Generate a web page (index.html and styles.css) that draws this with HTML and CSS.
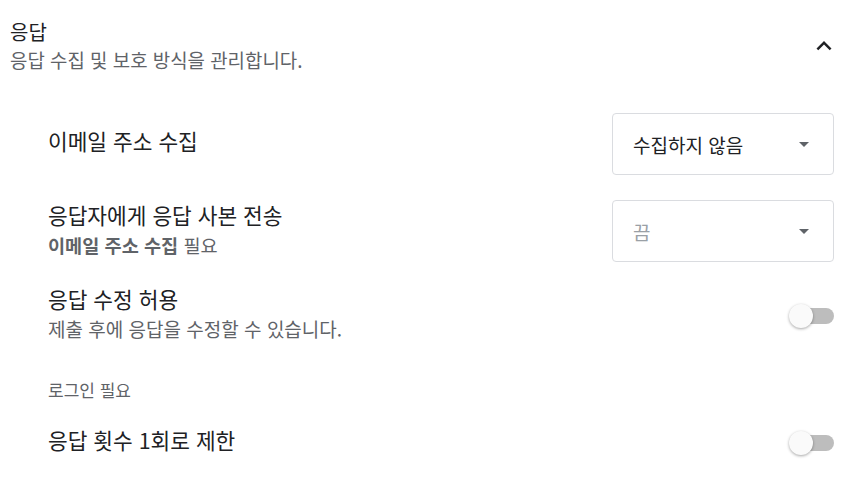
FILE: index.html
```html
<!DOCTYPE html>
<html lang="ko">
<head>
<meta charset="utf-8">
<link rel="stylesheet" href="styles.css">
</head>
<body>
<section class="panel">
  <header class="head">
    <div class="head-text">
      <div class="title">응답</div>
      <div class="subtitle">응답 수집 및 보호 방식을 관리합니다.</div>
    </div>
    <svg class="chev" width="30" height="30" viewBox="0 0 24 24"><path d="M7.41 15.41 12 10.83l4.59 4.58L18 14l-6-6-6 6z" fill="#202124"/></svg>
  </header>

  <div class="rows">
    <div class="row row-select">
      <div class="label">이메일 주소 수집</div>
      <div class="select">
        <span class="select-text">수집하지 않음</span>
        <span class="arrow"></span>
      </div>
    </div>

    <div class="row row-select2">
      <div class="text">
        <div class="label">응답자에게 응답 사본 전송</div>
        <div class="note"><b>이메일 주소 수집</b> 필요</div>
      </div>
      <div class="select">
        <span class="select-text disabled">끔</span>
        <span class="arrow"></span>
      </div>
    </div>

    <div class="row row-toggle">
      <div class="text">
        <div class="label">응답 수정 허용</div>
        <div class="desc">제출 후에 응답을 수정할 수 있습니다.</div>
      </div>
      <div class="toggle"><span class="thumb"></span></div>
    </div>

    <div class="group-label">로그인 필요</div>

    <div class="row row-toggle2">
      <div class="label">응답 횟수 1회로 제한</div>
      <div class="toggle"><span class="thumb"></span></div>
    </div>
  </div>
</section>
</body>
</html>
```

FILE: styles.css
```css
html, body {
  margin: 0;
  padding: 0;
  background: #fff;
}
body {
  font-family: "Noto Sans CJK KR", "Noto Sans", sans-serif;
  color: #202124;
}
.panel {
  width: 867px;
  height: 482px;
  box-sizing: border-box;
  padding: 19px 33px 0 10px;
}
.head {
  display: flex;
  justify-content: space-between;
  align-items: flex-start;
}
.title {
  font-size: 20px;
  line-height: 26px;
  color: #202124;
}
.subtitle {
  font-size: 18.9px;
  line-height: 26px;
  color: #5f6368;
  margin-top: 2px;
}
.chev {
  margin-top: 12px;
  margin-right: -5px;
}
.rows {
  padding-left: 38px;
  margin-top: 40px;
}
.row {
  display: flex;
  justify-content: space-between;
  align-items: center;
}
.text {
  padding-bottom: 4px;
}
.label {
  font-size: 21.4px;
  line-height: 28px;
  color: #202124;
}
.row-select .label {
  padding-bottom: 7px;
}
.row-toggle2 .label {
  padding-bottom: 4px;
}
.note {
  font-size: 18.6px;
  line-height: 24px;
  color: #5f6368;
  margin-top: 4px;
}
.note b {
  font-weight: 700;
}
.desc {
  font-size: 19px;
  line-height: 24px;
  color: #5f6368;
  margin-top: 4px;
}
.select {
  width: 222px;
  height: 62px;
  box-sizing: border-box;
  border: 1px solid #dadce0;
  border-radius: 4px;
  display: flex;
  align-items: center;
  justify-content: space-between;
  padding: 0 24px 0 20px;
}
.select-text {
  font-size: 19px;
  color: #202124;
}
.select-text.disabled {
  color: #9aa0a6;
}
.arrow {
  width: 0;
  height: 0;
  border-left: 5px solid transparent;
  border-right: 5px solid transparent;
  border-top: 5px solid #5f6368;
}
.row-select2 {
  margin-top: 25px;
}
.row-toggle {
  margin-top: 23px;
}
.toggle {
  position: relative;
  width: 37px;
  height: 16px;
  border-radius: 8px;
  background: #bdbdbd;
}
.row-toggle .toggle,
.row-toggle2 .toggle {
  margin-top: 2px;
}
.thumb {
  position: absolute;
  left: -8px;
  top: -4px;
  width: 24px;
  height: 24px;
  border-radius: 50%;
  background: #fafafa;
  box-shadow: 0 1px 3px rgba(0,0,0,0.35);
}
.group-label {
  font-size: 17px;
  line-height: 22px;
  color: #5f6368;
  margin-top: 34px;
}
.row-toggle2 {
  margin-top: 25px;
}
```
